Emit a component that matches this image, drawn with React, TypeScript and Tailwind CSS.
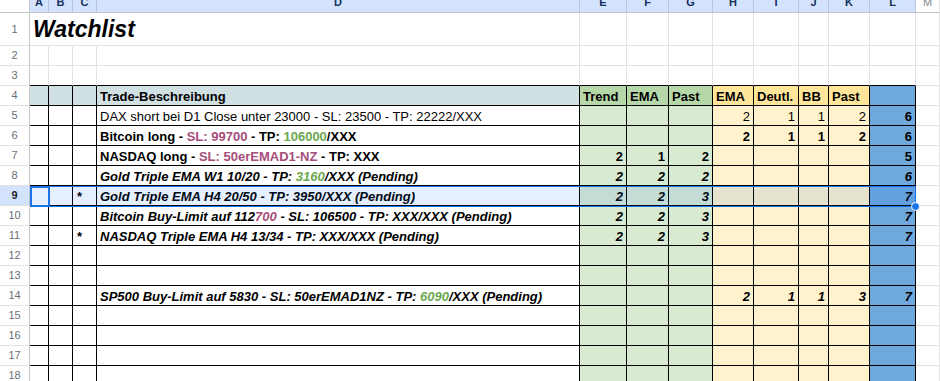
const COLS = ['A', 'B', 'C', 'D', 'E', 'F', 'G', 'H', 'I', 'J', 'K', 'L', 'M'];

type Seg = { t: string; c?: 'p' | 'g' };
type Line = {
    star?: boolean;
    d?: Seg[];
    s?: 'n' | 'b' | 'bi';
    nums?: (number | null)[]; // E..L
    numStyle?: 'n' | 'b' | 'bi';
};

const rows: Record<number, Line> = {
    5: {
        d: [{ t: 'DAX short bei D1 Close unter 23000 - SL: 23500 - TP: 22222/XXX' }],
        s: 'n',
        nums: [null, null, null, 2, 1, 1, 2, 6],
        numStyle: 'n'
    },
    6: {
        d: [
            { t: 'Bitcoin long - ' },
            { t: 'SL: 99700', c: 'p' },
            { t: ' - TP: ' },
            { t: '106000', c: 'g' },
            { t: '/XXX' }
        ],
        s: 'b',
        nums: [null, null, null, 2, 1, 1, 2, 6],
        numStyle: 'b'
    },
    7: {
        d: [{ t: 'NASDAQ long - ' }, { t: 'SL: 50erEMAD1-NZ', c: 'p' }, { t: ' - TP: XXX' }],
        s: 'b',
        nums: [2, 1, 2, null, null, null, null, 5],
        numStyle: 'b'
    },
    8: {
        d: [{ t: 'Gold Triple EMA W1 10/20 - TP: ' }, { t: '3160', c: 'g' }, { t: '/XXX (Pending)' }],
        s: 'bi',
        nums: [2, 2, 2, null, null, null, null, 6],
        numStyle: 'bi'
    },
    9: {
        star: true,
        d: [{ t: 'Gold Triple EMA H4 20/50 - TP: 3950/XXX (Pending)' }],
        s: 'bi',
        nums: [2, 2, 3, null, null, null, null, 7],
        numStyle: 'bi'
    },
    10: {
        d: [
            { t: 'Bitcoin Buy-Limit auf 112' },
            { t: '700', c: 'p' },
            { t: ' - SL: 106500 - TP: XXX/XXX (Pending)' }
        ],
        s: 'bi',
        nums: [2, 2, 3, null, null, null, null, 7],
        numStyle: 'bi'
    },
    11: {
        star: true,
        d: [{ t: 'NASDAQ Triple EMA H4 13/34 - TP: XXX/XXX (Pending)' }],
        s: 'bi',
        nums: [2, 2, 3, null, null, null, null, 7],
        numStyle: 'bi'
    },
    14: {
        d: [
            { t: 'SP500 Buy-Limit auf 5830 - SL: 50erEMAD1NZ - TP: ' },
            { t: '6090', c: 'g' },
            { t: '/XXX (Pending)' }
        ],
        s: 'bi',
        nums: [null, null, null, 2, 1, 1, 3, 7],
        numStyle: 'bi'
    }
};

const headerLabels = ['', '', '', 'Trade-Beschreibung', 'Trend', 'EMA', 'Past', 'EMA', 'Deutl.', 'BB', 'Past', ''];

const styleCls = (s?: 'n' | 'b' | 'bi') =>
    s === 'bi' ? 'font-bold italic' : s === 'b' ? 'font-bold' : 'font-normal';

const bgFor = (r: number, c: number) => {
    if (r < 4 || c === 12) return '';
    if (c <= 3) return r === 4 ? 'bg-[#d0e0e3]' : 'bg-white';
    if (c <= 6) return r === 4 ? 'bg-[#b6d7a8]' : 'bg-[#d9ead3]';
    if (c <= 10) return r === 4 ? 'bg-[#ffe599]' : 'bg-[#fff2cc]';
    return 'bg-[#6fa8dc]';
};

const borderFor = (r: number, c: number) => {
    const inTable = r >= 4 && c <= 11;
    const right = inTable
        ? 'border-r-black'
        : r === 1 && c <= 2
            ? 'border-r-transparent'
            : 'border-r-[#e2e2e2]';
    const bottom = inTable || (r === 3 && c <= 11) ? 'border-b-black' : 'border-b-[#e2e2e2]';
    return `border-r border-b ${right} ${bottom}`;
};

function Cell({ r, c }: { r: number; c: number }) {
    const base = `flex items-end min-w-0 ${bgFor(r, c)} ${borderFor(r, c)}`;

    if (r === 1 && c === 0) {
        return (
            <div className={`${base} pl-[3px] pb-[3px] overflow-visible relative z-10`}>
                <span className="text-[23px] leading-[26px] font-bold italic text-black whitespace-nowrap">
                    Watchlist
                </span>
            </div>
        );
    }

    if (r === 4) {
        return (
            <div className={`${base} pl-[3px]`}>
                <span className="text-[13px] leading-4 font-bold text-black whitespace-nowrap">
                    {headerLabels[c] ?? ''}
                </span>
            </div>
        );
    }

    const line = rows[r];
    if (!line || c === 12) return <div className={base} />;

    if (c === 2 && line.star) {
        return (
            <div className={`${base} pl-[4px]`}>
                <span className="text-[13px] leading-4 font-bold">*</span>
            </div>
        );
    }

    if (c === 3 && line.d) {
        return (
            <div className={`${base} pl-[3px]`}>
                <span className={`text-[13px] leading-4 whitespace-nowrap text-black ${styleCls(line.s)}`}>
                    {line.d.map((seg, i) => (
                        <span
                            key={i}
                            className={seg.c === 'p' ? 'text-[#a64d79]' : seg.c === 'g' ? 'text-[#6aa84f]' : ''}
                        >
                            {seg.t}
                        </span>
                    ))}
                </span>
            </div>
        );
    }

    if (c >= 4 && c <= 11 && line.nums) {
        const v = line.nums[c - 4];
        const st = c === 11 ? (line.numStyle === 'bi' ? 'bi' : 'b') : line.numStyle;
        return (
            <div className={`${base} justify-end pr-[3px]`}>
                {v !== null && (
                    <span className={`text-[13px] leading-4 text-black ${styleCls(st)}`}>{v}</span>
                )}
            </div>
        );
    }

    return <div className={base} />;
}

export default function App() {
    const bodyRows = Array.from({ length: 18 }, (_, i) => i + 1);

    return (
        <div className="w-[940px] h-[381px] overflow-hidden bg-white font-['Liberation_Sans',Arial,sans-serif] text-black">
            <div className="relative grid grid-cols-[30px_19px_24px_24px_483px_47px_42px_44px_41px_45px_30px_41px_46px_1fr] grid-rows-[13px_33px_repeat(17,20px)]">
                {/* column header */}
                <div className="bg-white border-r border-b border-[#c4c7c5]" />
                {COLS.map((col, i) => (
                    <div
                        key={col}
                        className={`flex justify-center items-start overflow-hidden border-r border-b border-b-[#c4c7c5] ${
                            i < 12 ? 'bg-[#d3e3fd] border-r-[#b7c6de]' : 'bg-white border-r-[#e2e2e2]'
                        }`}
                    >
                        <span
                            className={`text-[11px] leading-[11px] -mt-[3px] font-bold ${
                                i < 12 ? 'text-[#132f5c]' : 'text-[#80868b] font-normal'
                            }`}
                        >
                            {col}
                        </span>
                    </div>
                ))}

                {bodyRows.map(r => (
                    <div key={r} className="contents">
                        <div
                            className={`flex items-center justify-center border-r border-b border-r-[#c4c7c5] border-b-[#e2e2e2] text-[11px] ${
                                r === 9 ? 'bg-[#d3e3fd] font-bold text-[#1f1f1f]' : 'bg-white text-[#6b6f74]'
                            }`}
                        >
                            {r}
                        </div>
                        {COLS.map((_, c) => (
                            <Cell key={c} r={r} c={c} />
                        ))}
                    </div>
                ))}

                {/* selection A9:L9 */}
                <div className="absolute left-[30px] top-[186px] w-[886px] h-[21px] bg-[#0e65eb]/10 border border-[#1a73e8] pointer-events-none" />
                <div className="absolute left-[30px] top-[186px] w-[20px] h-[21px] border-2 border-[#1a73e8] pointer-events-none" />
                <div className="absolute left-[911px] top-[202px] w-[9px] h-[9px] rounded-full bg-[#1a73e8] border border-white" />
            </div>
        </div>
    );
}
